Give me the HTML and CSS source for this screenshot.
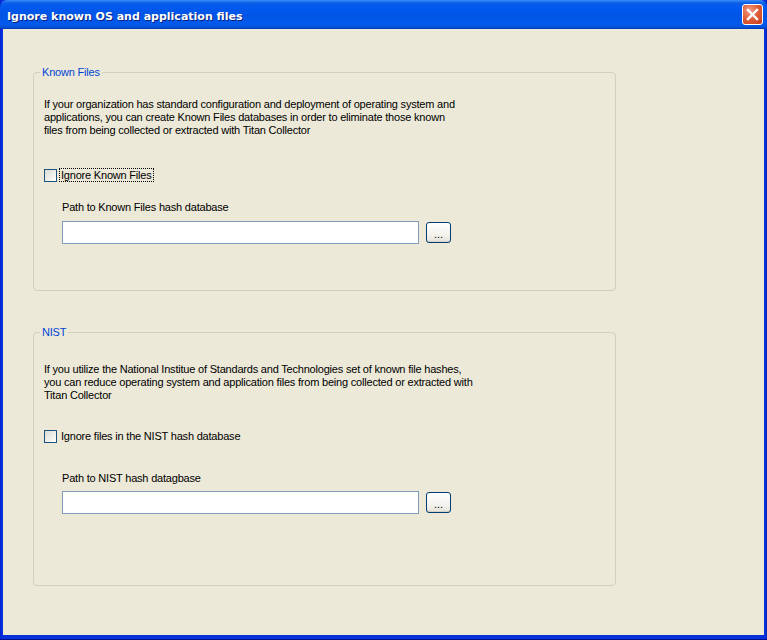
FILE: index.html
```html
<!DOCTYPE html>
<html lang="en">
<head>
    <meta charset="UTF-8">
    <title>Ignore known OS and application files</title>
    <link rel="stylesheet" href="styles.css">
</head>
<body>

<div class="window">
    <div class="titlebar">
        <span class="title">Ignore known OS and application files</span>
        <span class="close-btn">
            <svg width="13" height="13" viewBox="0 0 13 13">
                <path d="M2 2 L11 11 M11 2 L2 11" stroke="#fff" stroke-width="2.4" stroke-linecap="square"/>
            </svg>
        </span>
    </div>

    <div class="client">
        <fieldset class="group group-known">
            <legend>Known Files</legend>
            <p class="desc">If your organization has standard configuration and deployment of operating system and<br>
                applications, you can create Known Files databases in order to eliminate those known<br>
                files from being collected or extracted with Titan Collector</p>

            <label class="check">
                <span class="box"></span>
                <span class="check-text focused">Ignore Known Files</span>
            </label>

            <div class="path-group">
                <div class="path-label">Path to Known Files hash database</div>
                <div class="path-row">
                    <span class="textbox"></span>
                    <span class="browse">...</span>
                </div>
            </div>
        </fieldset>

        <fieldset class="group group-nist">
            <legend>NIST</legend>
            <p class="desc">If you utilize the National Institue of Standards and Technologies set of known file hashes,<br>
                you can reduce operating system and application files from being collected or extracted with<br>
                Titan Collector</p>

            <label class="check">
                <span class="box"></span>
                <span class="check-text">Ignore files in the NIST hash database</span>
            </label>

            <div class="path-group">
                <div class="path-label">Path to NIST hash datagbase</div>
                <div class="path-row">
                    <span class="textbox"></span>
                    <span class="browse">...</span>
                </div>
            </div>
        </fieldset>
    </div>
</div>

</body>
</html>
```

FILE: styles.css
```css
html, body {
    margin: 0;
    padding: 0;
}
body {
    width: 767px;
    height: 640px;
    overflow: hidden;
    font-family: "Liberation Sans", Arial, sans-serif;
    font-size: 11px;
    letter-spacing: -0.2px;
    color: #000;
}
.window {
    box-sizing: border-box;
    width: 767px;
    height: 640px;
    display: flex;
    flex-direction: column;
    background: linear-gradient(to right, #0019cf 0, #0831d9 1px, #0831d9 766px, #001ea0 767px);
    padding: 0 3px 4px 3px;
    border-bottom: 1px solid #001090;
}
.titlebar {
    height: 29px;
    margin: 0 -3px;
    padding: 0 4px 0 7px;
    display: flex;
    align-items: center;
    justify-content: space-between;
    background: linear-gradient(to bottom, #3c8cf8 0, #0a5fe6 3px, #0058ee 8px, #0155e5 16px, #0159ec 24px, #0554d8 27px, #0036b8 29px);
    border-radius: 7px 7px 0 0;
}
.title {
    color: #fff;
    font-family: "DejaVu Sans", Verdana, sans-serif;
    font-weight: bold;
    font-size: 11px;
    letter-spacing: 0;
    text-shadow: 1px 1px 0 #0a1e7a;
    padding-top: 3px;
}
.close-btn {
    box-sizing: border-box;
    width: 21px;
    height: 21px;
    display: flex;
    align-items: center;
    justify-content: center;
    border: 1px solid #fff;
    border-radius: 3px;
    background: radial-gradient(circle at 35% 30%, #f0a088 0, #e0603c 45%, #c6391a 100%);
}
.client {
    flex: 1;
    background: #ece9d8;
    padding: 37px 0 0 30px;
}
.group {
    box-sizing: border-box;
    width: 583px;
    margin: 0;
    padding: 0 10px 0 10px;
    border: 1px solid #d0d0bf;
    border-radius: 4px;
}
.group legend {
    color: #0046d5;
    padding: 0 2px;
    margin-left: -4px;
}
.group-known {
    height: 225px;
}
.group-nist {
    height: 260px;
    margin-top: 35px;
}
.desc {
    margin: 20px 0 0 0;
    line-height: 13px;
    white-space: nowrap;
}
.group-nist .desc {
    margin-top: 25px;
}
.check {
    display: flex;
    align-items: center;
    margin-top: 31px;
    margin-left: 0;
}
.group-nist .check {
    margin-top: 27px;
}
.box {
    box-sizing: border-box;
    width: 13px;
    height: 13px;
    border: 1px solid #1c5180;
    background: linear-gradient(135deg, #dcdcd7 0, #f0f0ea 60%, #fff 100%);
}
.check-text {
    margin-left: 2px;
    padding: 0 1px;
    border: 1px dotted transparent;
}
.check-text.focused {
    border-color: #000;
}
.path-group {
    margin-left: 18px;
    margin-top: 19px;
}
.group-nist .path-group {
    margin-top: 29px;
}
.path-label {
    line-height: 13px;
}
.path-row {
    display: flex;
    align-items: center;
    gap: 7px;
    margin-top: 7px;
}
.group-nist .path-row {
    margin-top: 6px;
}
.textbox {
    box-sizing: border-box;
    width: 357px;
    height: 23px;
    border: 1px solid #7f9db9;
    background: #fff;
}
.browse {
    box-sizing: border-box;
    width: 25px;
    height: 21px;
    display: flex;
    align-items: center;
    justify-content: center;
    padding-top: 2px;
    border: 1px solid #003c74;
    border-radius: 3px;
    background: linear-gradient(to bottom, #fff 0, #f4f3ee 60%, #e3e2da 100%);
    box-shadow: inset 0 -1px 0 #d6d0c5;
    font-size: 11px;
    letter-spacing: 0;
}
```
